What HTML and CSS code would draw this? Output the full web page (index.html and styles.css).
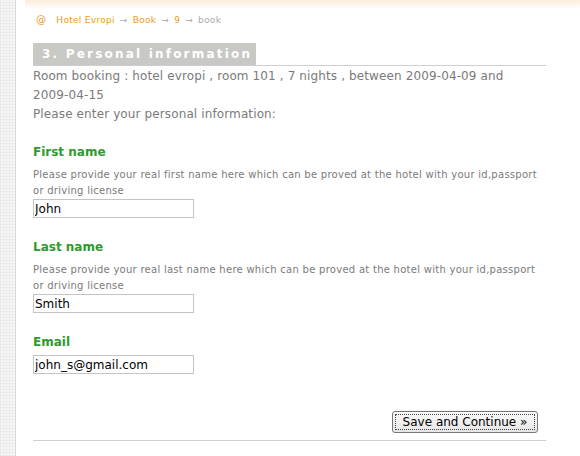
FILE: index.html
```html
<!DOCTYPE html>
<html>
<head>
<meta charset="utf-8">
<link rel="stylesheet" href="styles.css">
</head>
<body>
<div class="page">
  <div class="side"></div>
  <div class="main">
    <div class="topband"></div>
    <div class="content">
      <div class="crumbs">
        <span class="at">@</span>
        <a class="crumb">Hotel Evropi</a><span class="arr">&rarr;</span>
        <a class="crumb">Book</a><span class="arr">&rarr;</span>
        <a class="crumb">9</a><span class="arr">&rarr;</span>
        <span class="cur">book</span>
      </div>
      <div class="heading"><span class="htitle">3. Personal information</span></div>
      <p class="intro">Room booking : hotel evropi , room 101 , 7 nights , between 2009-04-09 and <span class="nw">2009-04-15</span></p>
      <p class="intro">Please enter your personal information:</p>

      <div class="field">
        <div class="label">First name</div>
        <div class="help">Please provide your real first name here which can be proved at the hotel with your id,passport or driving license</div>
        <input class="inp" type="text" value="John">
      </div>
      <div class="field">
        <div class="label">Last name</div>
        <div class="help">Please provide your real last name here which can be proved at the hotel with your id,passport or driving license</div>
        <input class="inp" type="text" value="Smith">
      </div>
      <div class="field email">
        <div class="label">Email</div>
        <input class="inp" type="text" value="john_s@gmail.com">
      </div>

      <div class="actions"><button class="btn">Save and Continue &raquo;</button></div>
      <div class="bottomline"></div>
    </div>
  </div>
</div>
</body>
</html>
```
FILE: styles.css
```css
html, body { margin: 0; padding: 0; }
body {
  width: 580px; height: 456px; overflow: hidden;
  background: #fff;
  font-family: "DejaVu Sans", Verdana, sans-serif;
}
.page { display: flex; height: 456px; }
.side {
  width: 15px; flex: none;
  border-right: 1px solid #d8d8d8;
  background-color: #f7f7f7;
  background-image:
    repeating-linear-gradient(0deg, #ebebeb 0 1px, transparent 1px 3px),
    repeating-linear-gradient(90deg, #ebebeb 0 1px, transparent 1px 3px);
}
.main { flex: 1; display: flex; flex-direction: column; }
.topband {
  height: 9px; margin-left: 9px;
  background: linear-gradient(to bottom, #fbeedc, #fffaf4 80%, #fff);
}
.content { padding-left: 17px; width: 513px; }
.crumbs {
  margin-top: 4px; height: 14px;
  font-size: 9px; line-height: 14px; color: #f09a1e; letter-spacing: 0.3px;
  display: flex; align-items: center;
}
.at { margin-left: 3px; margin-right: 10px; font-size: 10px; }
.crumb { color: #f09a1e; }
.arr { color: #aaa; margin: 0 5px; font-size: 9px; }
.cur { color: #aaa; }
.heading {
  margin-top: 16px;
  border-bottom: 1px solid #cfcfcf;
  display: flex;
}
.htitle {
  background: #c8c8c4; color: #fff;
  font-weight: bold; font-size: 12px; letter-spacing: 2.2px;
  white-space: nowrap;
  height: 22px; line-height: 22px;
  padding: 0 4px 0 9px;
}
.intro {
  margin: 0; font-size: 12px; line-height: 19px; color: #7a7a7a;
  letter-spacing: 0.12px;
}
.intro:first-of-type { margin-top: 1px; }
.nw { white-space: nowrap; }
.field { margin-top: 19px; }
.field + .field { margin-top: 20px; }
.label {
  color: #2e9a2e; font-weight: bold; font-size: 12px; line-height: 18px;
}
.help {
  margin-top: 6px; width: 508px;
  font-size: 10px; line-height: 16px; color: #7a7a7a; letter-spacing: 0.27px;
}
.inp {
  display: block; box-sizing: border-box;
  width: 161px; height: 19px; margin: 0;
  border: 1px solid #c4c4c4; padding: 0 1px;
  font-family: "DejaVu Sans", Verdana, sans-serif;
  font-size: 12px; color: #000; background: #fff;
}
.email .inp { margin-top: 4px; }
.actions { display: flex; justify-content: flex-end; margin-top: 37px; padding-right: 8px; }
.btn {
  width: 146px; height: 22px; box-sizing: border-box;
  font-family: "DejaVu Sans", Verdana, sans-serif; font-size: 12px; color: #000;
  background: linear-gradient(#fafafa, #e6e6e6);
  border: 1px solid #777; border-radius: 3px;
  outline: 1px dotted #444; outline-offset: -4px;
  padding: 0;
}
.bottomline { margin-top: 7px; border-top: 1px solid #cfcfcf; width: 513px; }
```
